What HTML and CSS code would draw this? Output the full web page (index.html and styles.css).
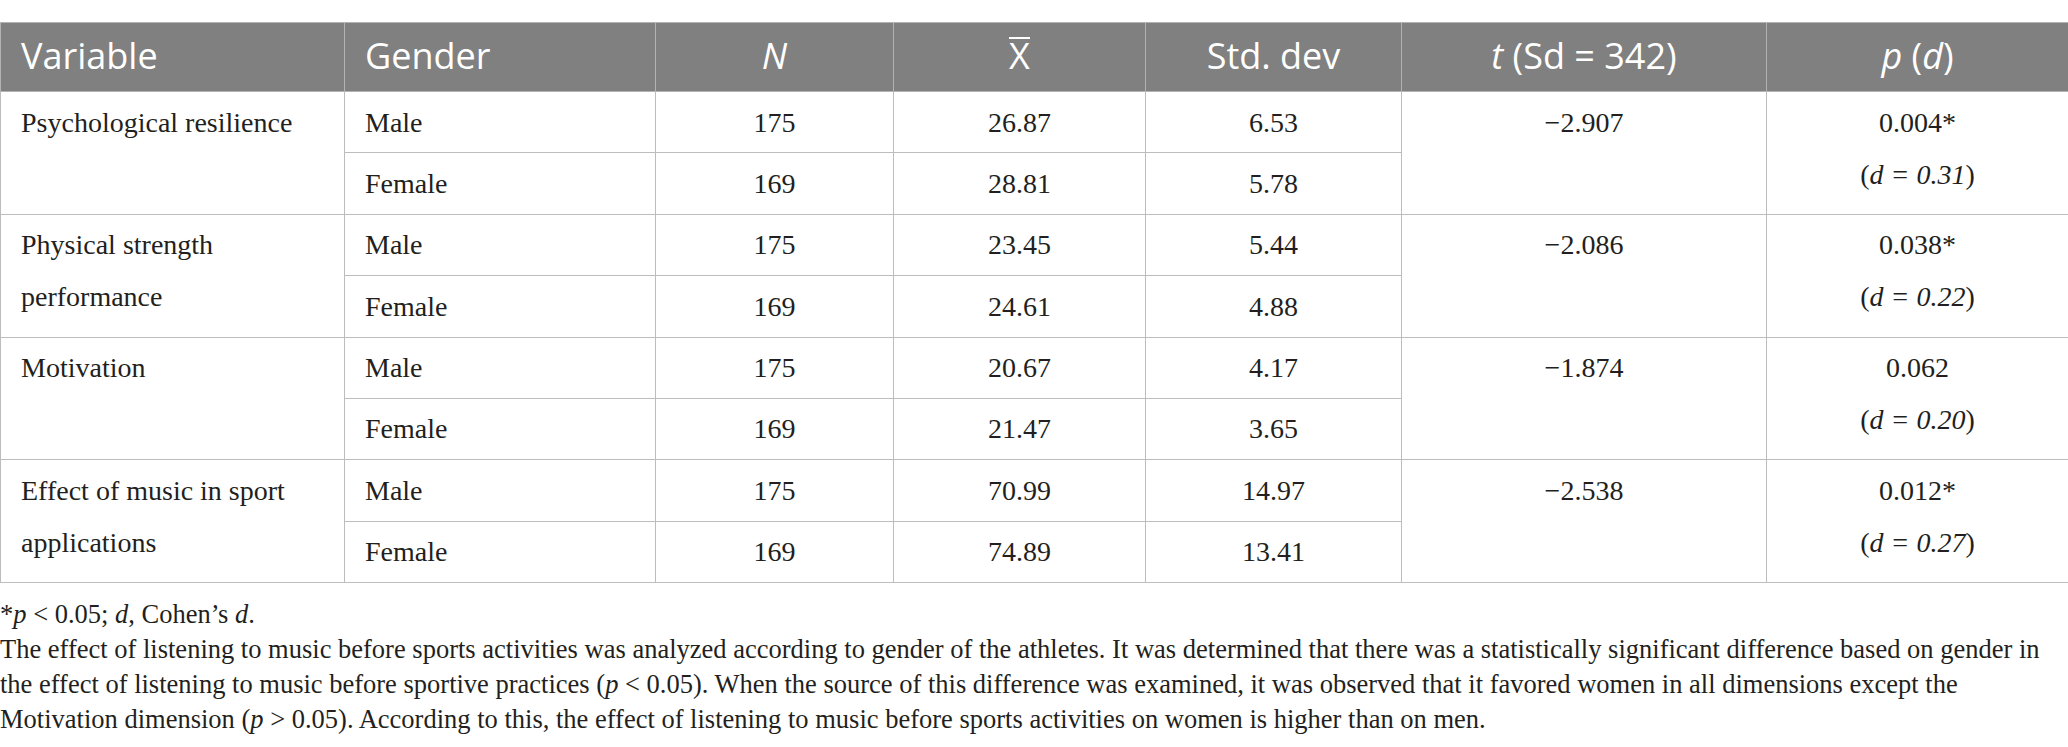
FILE: index.html
```html
<!DOCTYPE html>
<html lang="en">
<head>
<meta charset="utf-8">
<title>Table</title>
<link rel="stylesheet" href="styles.css">
</head>
<body>
<div class="page">
  <table class="data">
    <colgroup>
      <col class="c-var"><col class="c-gen"><col class="c-n"><col class="c-x"><col class="c-sd"><col class="c-t"><col class="c-p">
    </colgroup>
    <thead>
      <tr>
        <th class="l">Variable</th>
        <th class="l">Gender</th>
        <th><i>N</i></th>
        <th><span class="xbar">X</span></th>
        <th>Std. dev</th>
        <th><i>t</i> (Sd = 342)</th>
        <th><i>p</i> (<i>d</i>)</th>
      </tr>
    </thead>
    <tbody>
      <tr>
        <td rowspan="2" class="l">Psychological resilience</td>
        <td class="l">Male</td><td>175</td><td>26.87</td><td>6.53</td>
        <td rowspan="2">−2.907</td>
        <td rowspan="2">0.004*<br>(<i>d = 0.31</i>)</td>
      </tr>
      <tr>
        <td class="l">Female</td><td>169</td><td>28.81</td><td>5.78</td>
      </tr>
      <tr>
        <td rowspan="2" class="l">Physical strength performance</td>
        <td class="l">Male</td><td>175</td><td>23.45</td><td>5.44</td>
        <td rowspan="2">−2.086</td>
        <td rowspan="2">0.038*<br>(<i>d = 0.22</i>)</td>
      </tr>
      <tr>
        <td class="l">Female</td><td>169</td><td>24.61</td><td>4.88</td>
      </tr>
      <tr>
        <td rowspan="2" class="l">Motivation</td>
        <td class="l">Male</td><td>175</td><td>20.67</td><td>4.17</td>
        <td rowspan="2">−1.874</td>
        <td rowspan="2">0.062<br>(<i>d = 0.20</i>)</td>
      </tr>
      <tr>
        <td class="l">Female</td><td>169</td><td>21.47</td><td>3.65</td>
      </tr>
      <tr>
        <td rowspan="2" class="l">Effect of music in sport applications</td>
        <td class="l">Male</td><td>175</td><td>70.99</td><td>14.97</td>
        <td rowspan="2">−2.538</td>
        <td rowspan="2">0.012*<br>(<i>d = 0.27</i>)</td>
      </tr>
      <tr>
        <td class="l">Female</td><td>169</td><td>74.89</td><td>13.41</td>
      </tr>
    </tbody>
  </table>
  <div class="notes">
    <p>*<i>p</i> &lt; 0.05; <i>d</i>, Cohen’s <i>d</i>.</p>
    <p>The effect of listening to music before sports activities was analyzed according to gender of the athletes. It was determined that there was a statistically significant difference based on gender in<br>the effect of listening to music before sportive practices (<i>p</i> &lt; 0.05). When the source of this difference was examined, it was observed that it favored women in all dimensions except the<br>Motivation dimension (<i>p</i> &gt; 0.05). According to this, the effect of listening to music before sports activities on women is higher than on men.</p>
  </div>
</div>
</body>
</html>
```

FILE: styles.css
```css
html, body {
  margin: 0;
  padding: 0;
  background: #ffffff;
}

body {
  font-family: "Liberation Serif", "Times New Roman", serif;
  color: #231f20;
}

.page {
  padding-top: 22px;
}

table.data {
  width: 100%;
  border-collapse: collapse;
  table-layout: fixed;
  font-size: 28px;
}

.c-var { width: 344px; }
.c-gen { width: 311px; }
.c-n { width: 238px; }
.c-x { width: 252px; }
.c-sd { width: 256px; }
.c-t { width: 365px; }
.c-p { width: 302px; }

.data th {
  background: #808080;
  color: #ffffff;
  font-family: "Open Sans", "DejaVu Sans", sans-serif;
  font-weight: 400;
  font-size: 36px;
  line-height: 49px;
  padding: 8px 20px 11px;
  border: 1px solid #b3b3b3;
  text-align: center;
  white-space: nowrap;
}

.data th.l {
  text-align: left;
}

.xbar {
  display: inline-block;
  line-height: 28px;
  border-top: 2px solid #ffffff;
  padding-top: 3px;
}

.data td {
  border: 1px solid #bdbdbd;
  padding: 4.5px 20px 3.9px;
  line-height: 52px;
  text-align: center;
  vertical-align: top;
}

.data td.l {
  text-align: left;
}

.notes {
  margin-top: 14px;
  font-size: 26.5px;
  line-height: 35px;
}

.notes p {
  margin: 0;
}
```
